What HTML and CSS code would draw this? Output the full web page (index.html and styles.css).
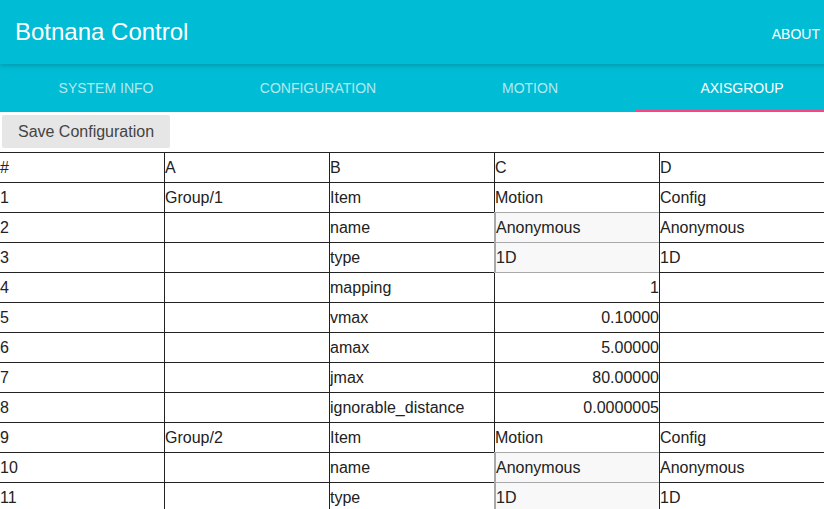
FILE: index.html
```html
<!DOCTYPE html>
<html>
<head>
<meta charset="utf-8">
<link rel="stylesheet" href="styles.css">
</head>
<body>
<div class="app">
  <header class="appbar">
    <h1 class="title">Botnana Control</h1>
    <span class="about">ABOUT</span>
  </header>
  <nav class="tabs">
    <div class="tab">SYSTEM INFO</div>
    <div class="tab">CONFIGURATION</div>
    <div class="tab">MOTION</div>
    <div class="tab active">AXISGROUP</div>
  </nav>
  <div class="toolbar">
    <button class="btn">Save Configuration</button>
  </div>
  <table class="grid">
    <tr><td>#</td><td>A</td><td>B</td><td>C</td><td>D</td></tr>
    <tr><td>1</td><td>Group/1</td><td>Item</td><td>Motion</td><td>Config</td></tr>
    <tr><td>2</td><td></td><td>name</td><td><div class="input">Anonymous</div></td><td>Anonymous</td></tr>
    <tr><td>3</td><td></td><td>type</td><td><div class="input">1D</div></td><td>1D</td></tr>
    <tr><td>4</td><td></td><td>mapping</td><td class="num">1</td><td></td></tr>
    <tr><td>5</td><td></td><td>vmax</td><td class="num">0.10000</td><td></td></tr>
    <tr><td>6</td><td></td><td>amax</td><td class="num">5.00000</td><td></td></tr>
    <tr><td>7</td><td></td><td>jmax</td><td class="num">80.00000</td><td></td></tr>
    <tr><td>8</td><td></td><td>ignorable_distance</td><td class="num">0.0000005</td><td></td></tr>
    <tr><td>9</td><td>Group/2</td><td>Item</td><td>Motion</td><td>Config</td></tr>
    <tr><td>10</td><td></td><td>name</td><td><div class="input">Anonymous</div></td><td>Anonymous</td></tr>
    <tr><td>11</td><td></td><td>type</td><td><div class="input">1D</div></td><td>1D</td></tr>
  </table>
</div>
</body>
</html>
```
FILE: styles.css
```css
html, body {
  margin: 0;
  padding: 0;
  overflow: hidden;
  background: #ffffff;
}
body {
  font-family: "Liberation Sans", Arial, sans-serif;
}
.app {
  width: 848px;
}
.appbar {
  height: 64px;
  background: #00bcd4;
  display: flex;
  align-items: center;
  padding-left: 15px;
  box-sizing: border-box;
  position: relative;
  z-index: 2;
  box-shadow: 0 1px 6px rgba(0,0,0,0.12), 0 1px 4px rgba(0,0,0,0.12);
}
.title {
  margin: 0;
  font-size: 24px;
  font-weight: normal;
  color: #ffffff;
  line-height: 24px;
  padding-bottom: 1px;
}
.about {
  margin-left: auto;
  margin-right: 28px;
  font-size: 14px;
  color: #ffffff;
  padding-top: 4px;
}
.tabs {
  display: grid;
  grid-template-columns: repeat(4, 212px);
  height: 48px;
  background: #00bcd4;
}
.tab {
  display: flex;
  align-items: center;
  justify-content: center;
  font-size: 14px;
  color: rgba(255,255,255,0.7);
}
.tab.active {
  color: #ffffff;
  box-shadow: inset 0 -2px 0 #ff4081;
}
.toolbar {
  padding: 3px 0 4px 2px;
  display: flex;
}
.btn {
  height: 33px;
  width: 168px;
  border: none;
  border-radius: 2px;
  background: #e6e6e6;
  color: #444444;
  font-family: "Liberation Sans", Arial, sans-serif;
  font-size: 16px;
  padding: 0;
}
.grid {
  border-collapse: separate;
  border-spacing: 0;
  border-top: 1px solid #222222;
  table-layout: fixed;
  font-size: 16px;
  color: #222222;
}
.grid td {
  width: 164px;
  height: 29px;
  padding: 0;
  border-right: 1px solid #222222;
  border-bottom: 1px solid #222222;
  vertical-align: middle;
  white-space: nowrap;
  line-height: 18px;
}
.grid td.num {
  text-align: right;
}
.input {
  margin: -1px 0 -1px -1px;
  height: 31px;
  box-sizing: border-box;
  border: 1px solid #a9a9a9;
  border-left-width: 2px;
  border-right: none;
  background: #f8f8f8;
  display: flex;
  align-items: center;
  padding-left: 0;
}
```
